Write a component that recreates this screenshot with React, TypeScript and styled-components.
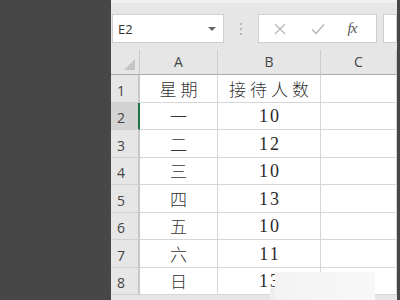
import React from "react";
import styled, { createGlobalStyle } from "styled-components";

const Global = createGlobalStyle`
  html, body { margin: 0; padding: 0; width: 400px; height: 300px; overflow: hidden; background: #474747; }
  #root { width: 400px; height: 300px; }
`;

const Screen = styled.div`
  display: flex;
  width: 400px;
  height: 300px;
  background: #474747;
  overflow: hidden;
`;

const SidePanel = styled.div<{ $w: number }>`
  width: ${(p) => p.$w}px;
  flex: none;
  background: #474747;
`;

const Main = styled.div`
  position: relative;
  width: 286px;
  flex: none;
  display: flex;
  flex-direction: column;
  background: #e6e6e6;
  overflow: hidden;
`;

const Toolbar = styled.div`
  height: 50px;
  box-sizing: border-box;
  border-top: 3px solid #f0f0f0;
  padding: 11px 0 0 1px;
  display: flex;
  align-items: flex-start;
  background: #e6e6e6;
  font-family: "Open Sans", "Liberation Sans", sans-serif;
`;

const Box = styled.div<{ $w?: number }>`
  box-sizing: border-box;
  height: 29px;
  background: #fff;
  border: 1px solid #cfcfcf;
  display: flex;
  align-items: center;
  ${(p) => (p.$w ? `width: ${p.$w}px; flex: none;` : "flex: 1;")}
`;

const NameText = styled.span`
  flex: 1;
  padding-left: 5px;
  font-size: 13px;
  color: #333;
`;

const Caret = styled.span`
  width: 0;
  height: 0;
  border-left: 4px solid transparent;
  border-right: 4px solid transparent;
  border-top: 4px solid #666;
  margin-right: 7px;
`;

const Dots = styled.div`
  width: 34px;
  flex: none;
  display: flex;
  flex-direction: column;
  align-items: center;
  gap: 3px;
  padding-top: 9px;
  span { width: 2px; height: 2px; background: #a8a8a8; border-radius: 1px; }
`;

const FxIcon = styled.span<{ $c: string; $w: number }>`
  width: ${(p) => p.$w}px;
  flex: none;
  text-align: center;
  color: ${(p) => p.$c};
  display: flex;
  justify-content: center;
`;

const FxText = styled.span`
  font-family: "Liberation Serif", serif;
  font-style: italic;
  font-size: 15px;
  color: #555;
  letter-spacing: -1px;
`;

const Gap = styled.div<{ $w: number }>`
  width: ${(p) => p.$w}px;
  flex: none;
`;

const Grid = styled.div`
  display: grid;
  grid-template-columns: 29px 78px 103px 76px;
  grid-template-rows: 25px repeat(8, 27.5px);
  background: #fff;
`;

const Corner = styled.div`
  background: #e6e6e6;
  border-right: 1px solid #c8c8c8;
  border-bottom: 1px solid #ababab;
  box-sizing: border-box;
  position: relative;
  &::after {
    content: "";
    position: absolute;
    right: 4px;
    bottom: 4px;
    width: 0;
    height: 0;
    border-left: 11px solid transparent;
    border-bottom: 11px solid #c4c4c4;
  }
`;

const ColHead = styled.div`
  background: #e6e6e6;
  border-right: 1px solid #cdcdcd;
  border-bottom: 1px solid #ababab;
  box-sizing: border-box;
  display: flex;
  align-items: flex-end;
  justify-content: center;
  padding-bottom: 3px;
  font-family: "Open Sans", "Liberation Sans", sans-serif;
  font-size: 14px;
  color: #444;
`;

const RowHead = styled.div<{ $sel?: boolean }>`
  background: ${(p) => (p.$sel ? "#d3d3d3" : "#e6e6e6")};
  border-right: 2px solid ${(p) => (p.$sel ? "#217346" : "#c8c8c8")};
  border-bottom: 1px solid #d0d0d0;
  box-sizing: border-box;
  display: flex;
  align-items: flex-end;
  padding: 0 0 2px 6px;
  font-family: "Open Sans", "Liberation Sans", sans-serif;
  font-size: 14px;
  color: #444;
`;

const Cell = styled.div<{ $num?: boolean }>`
  border-right: 1px solid #d6d6d6;
  border-bottom: 1px solid #d6d6d6;
  box-sizing: border-box;
  display: flex;
  align-items: flex-end;
  justify-content: center;
  padding-bottom: 1px;
  padding-left: ${(p) => (p.$num ? 2 : 4)}px;
  color: ${(p) => (p.$num ? "#2a2a2a" : "#333")};
  white-space: nowrap;
  font-family: ${(p) =>
    p.$num
      ? `"Liberation Serif", "Noto Sans CJK SC", serif`
      : `"Noto Sans CJK SC", serif`};
  font-size: ${(p) => (p.$num ? 18 : 17)}px;
  font-weight: ${(p) => (p.$num ? 400 : 300)};
  letter-spacing: ${(p) => (p.$num ? 2 : 4)}px;
  line-height: 24px;
`;

const Patch = styled.div`
  position: absolute;
  left: 164px;
  top: 272px;
  width: 100px;
  height: 28px;
  background: linear-gradient(90deg, #f3f3f3, #f8f8f8);
  &::before {
    content: "";
    position: absolute;
    left: -5px;
    top: 16px;
    width: 5px;
    height: 12px;
    background: #eeeeee;
  }
`;

const rows: [string, string][] = [
  ["星期", "接待人数"],
  ["一", "10"],
  ["二", "12"],
  ["三", "10"],
  ["四", "13"],
  ["五", "10"],
  ["六", "11"],
  ["日", "13"],
];

export default function App() {
  return (
    <>
      <Global />
      <Screen>
        <SidePanel $w={111} />
        <Main>
          <Toolbar>
            <Box $w={112}>
              <NameText>E2</NameText>
              <Caret />
            </Box>
            <Dots>
              <span />
              <span />
              <span />
            </Dots>
            <Box $w={119}>
              <Gap $w={8} />
              <FxIcon $c="#b5b5b5" $w={26}>
                <svg width="12" height="12" viewBox="0 0 12 12">
                  <path d="M1 1L11 11M11 1L1 11" stroke="currentColor" strokeWidth="1.3" fill="none" />
                </svg>
              </FxIcon>
              <Gap $w={12} />
              <FxIcon $c="#b5b5b5" $w={26}>
                <svg width="14" height="12" viewBox="0 0 14 12">
                  <path d="M1 6.5L5 10.5L13 1.5" stroke="currentColor" strokeWidth="1.3" fill="none" />
                </svg>
              </FxIcon>
              <Gap $w={8} />
              <FxIcon $c="#555" $w={26}>
                <FxText>fx</FxText>
              </FxIcon>
            </Box>
            <Gap $w={6} />
            <Box />
          </Toolbar>
          <Grid>
            <Corner />
            <ColHead>A</ColHead>
            <ColHead>B</ColHead>
            <ColHead>C</ColHead>
            {rows.map(([a, b], i) => (
              <React.Fragment key={i}>
                <RowHead $sel={i === 1}>{i + 1}</RowHead>
                <Cell $num={false}>{a}</Cell>
                <Cell $num={i > 0}>{b}</Cell>
                <Cell />
              </React.Fragment>
            ))}
          </Grid>
          <Patch />
        </Main>
        <SidePanel $w={3} />
      </Screen>
    </>
  );
}
